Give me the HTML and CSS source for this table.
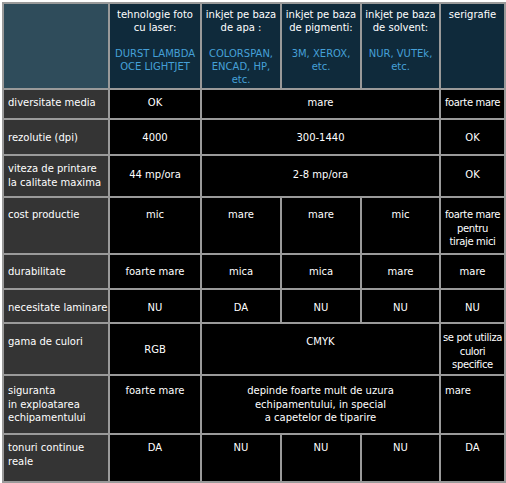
FILE: index.html
```html
<!DOCTYPE html>
<html>
<head>
<meta charset="utf-8">
<link rel="stylesheet" href="styles.css">
</head>
<body>
<table class="cmp">
  <colgroup>
    <col class="c-label"><col class="c-laser"><col class="c-apa"><col class="c-pig"><col class="c-solv"><col class="c-seri">
  </colgroup>
  <tr class="r-head">
    <th class="corner"></th>
    <th>tehnologie foto<br>cu laser:<br><br><span class="brand">DURST LAMBDA<br>OCE LIGHTJET</span></th>
    <th>inkjet pe baza<br>de apa :<br><br><span class="brand">COLORSPAN,<br>ENCAD, HP,<br>etc.</span></th>
    <th>inkjet pe baza<br>de pigmenti:<br><br><span class="brand">3M, XEROX,<br>etc.</span></th>
    <th>inkjet pe baza<br>de solvent:<br><br><span class="brand">NUR, VUTEk,<br>etc.</span></th>
    <th>serigrafie</th>
  </tr>
  <tr class="r1">
    <td class="label">diversitate media</td>
    <td>OK</td>
    <td colspan="3">mare</td>
    <td class="tight">foarte mare</td>
  </tr>
  <tr class="r2">
    <td class="label">rezolutie (dpi)</td>
    <td>4000</td>
    <td colspan="3">300-1440</td>
    <td>OK</td>
  </tr>
  <tr class="r3">
    <td class="label">viteza de printare<br>la calitate maxima</td>
    <td class="mid">44 mp/ora</td>
    <td colspan="3" class="mid">2-8 mp/ora</td>
    <td class="mid">OK</td>
  </tr>
  <tr class="r4">
    <td class="label">cost productie</td>
    <td>mic</td>
    <td>mare</td>
    <td>mare</td>
    <td>mic</td>
    <td class="tight">foarte mare<br>pentru<br>tiraje mici</td>
  </tr>
  <tr class="r5">
    <td class="label">durabilitate</td>
    <td>foarte mare</td>
    <td>mica</td>
    <td>mica</td>
    <td>mare</td>
    <td>mare</td>
  </tr>
  <tr class="r6">
    <td class="label">necesitate laminare</td>
    <td>NU</td>
    <td>DA</td>
    <td>NU</td>
    <td>NU</td>
    <td>NU</td>
  </tr>
  <tr class="r7">
    <td class="label">gama de culori</td>
    <td class="rgb">RGB</td>
    <td colspan="3">CMYK</td>
    <td class="tight seri-top">se pot utiliza<br>culori<br>specifice</td>
  </tr>
  <tr class="r8">
    <td class="label">siguranta<br>in exploatarea<br>echipamentului</td>
    <td>foarte mare</td>
    <td colspan="3">depinde foarte mult de uzura<br>echipamentului, in special<br>a capetelor de tiparire</td>
    <td class="left">mare</td>
  </tr>
  <tr class="r9">
    <td class="label">tonuri continue<br>reale</td>
    <td>DA</td>
    <td>NU</td>
    <td>NU</td>
    <td>NU</td>
    <td>DA</td>
  </tr>
</table>
</body>
</html>
```

FILE: styles.css
```css
html, body {
  margin: 0;
  padding: 0;
  background: #ffffff;
}

.cmp {
  margin: 2px 0 0 2px;
  border-collapse: collapse;
  table-layout: fixed;
  width: 502px;
  font-family: "DejaVu Sans", Verdana, sans-serif;
  font-size: 10px;
  color: #ffffff;
  background: #000000;
}

.c-label { width: 106px; }
.c-laser { width: 92px; }
.c-apa { width: 80px; }
.c-pig { width: 80px; }
.c-solv { width: 79px; }
.c-seri { width: 65px; }

.cmp th,
.cmp td {
  border: 2px solid #9a9a9a;
  vertical-align: top;
  text-align: center;
  padding: 0 2px;
  line-height: 13.5px;
  white-space: nowrap;
  overflow: hidden;
}

.cmp th {
  font-weight: normal;
  background: #0f2a3b;
  line-height: 13px;
  padding-top: 4px;
}

.cmp th.corner {
  background: #2f4c5b;
}

.brand {
  color: #45a0d8;
}

.cmp td.label {
  background: #343434;
  text-align: left;
  padding-left: 4px;
}

.cmp td.left {
  text-align: left;
  padding-left: 4px;
}

.cmp td.tight {
  padding-left: 0;
  padding-right: 0;
  letter-spacing: -0.35px;
}

.r-head { height: 86px; }
.r1 { height: 30px; }
.r2 { height: 36px; }
.r3 { height: 42px; }
.r4 { height: 57px; }
.r5 { height: 35px; }
.r6 { height: 34px; }
.r7 { height: 52px; }
.r8 { height: 59px; }
.r9 { height: 48px; }

.r1 td { padding-top: 6px; }
.r2 td { padding-top: 11px; }
.r3 td { padding-top: 6px; }
.r3 td.mid { padding-top: 12px; }
.r4 td { padding-top: 10px; }
.r5 td { padding-top: 10px; }
.r6 td { padding-top: 11px; }
.r7 td { padding-top: 11px; }
.r7 td.rgb { padding-top: 19px; }
.r7 td.seri-top { padding-top: 7px; }
.r8 td { padding-top: 8px; }
.r9 td { padding-top: 6px; }
```
